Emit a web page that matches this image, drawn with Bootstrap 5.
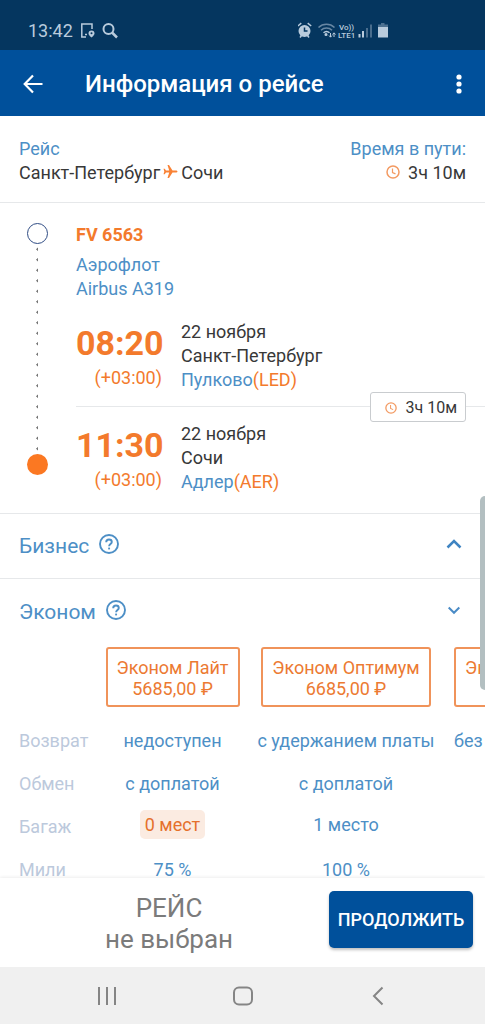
<!DOCTYPE html>
<html lang="ru">
<head>
<meta charset="utf-8">
<meta name="viewport" content="width=device-width, initial-scale=1">
<title>Информация о рейсе</title>
<link href="https://cdn.jsdelivr.net/npm/bootstrap@5.3.0/dist/css/bootstrap.min.css" rel="stylesheet">
<style>
  :root { --sky: #4d8fc6; --flame: #f37a2c; --navy: #00509b; --edge: 19px; }
  body { font-family: Roboto, "Liberation Sans", sans-serif; font-size: 18px; line-height: 24px; color: #383838; background: #fff; }
  .c-sky { color: var(--sky); }
  .c-flame { color: var(--flame); }
  .edge-x { padding-left: var(--edge); padding-right: var(--edge); }
  .rule { border-bottom: 1px solid #e6e8ea; }
  .plain-btn { background: none; border: 0; padding: 0; line-height: 0; color: inherit; }

  .status-bar { background: #05365f; color: #b9cbdc; height: 50px; padding: 12px 94px 0 28px; }
  .app-bar { background: var(--navy); color: #fff; height: 66px; padding: 2px 17px 0 21px; }
  .app-title { font-size: 24px; line-height: 32px; font-weight: 500; margin-left: 40px; }

  .summary { padding-top: 21px; padding-bottom: 17px; }
  .plane { margin: 3px 3px 0; }
  .route { padding: 20px 0 19px 27px; gap: 28px; }
  .timeline { width: 21px; margin-bottom: 19px; }
  .stop-start, .stop-end { width: 21px; height: 21px; border-radius: 50%; flex: none; }
  .stop-start { border: 1px solid #2f4c84; }
  .stop-end { background: #fb7822; }
  .dots { width: 3px; background: radial-gradient(circle, #777 0 1px, transparent 1px) center top / 3px 5%; }
  .carrier { margin: 6px 0 19px; }
  .leg { gap: 19px; }
  .leg-time { width: 86px; text-align: right; }
  .clock-time { font-size: 34px; line-height: 46px; font-weight: 700; }
  .leg-split { border-top: 1px solid #e6e8ea; margin: 14px 0 15px; }
  .duration { right: var(--edge); background: #fff; border: 1px solid #c9cccf; border-radius: 3px; font-size: 16px; line-height: 27px; padding: 1px 8px 0 14px; gap: 8px; }

  .fare-head { height: 65px; padding-right: 22px; }
  .fare-name { font-size: 21px; gap: 10px; }
  .fares { table-layout: fixed; width: 652px; margin: 3px 0 0; }
  .fares th, .fares td { padding: 0; height: 43px; text-align: center; font-weight: 400; white-space: nowrap; color: var(--sky); }
  .fares tbody th { color: #bcc9dc; text-align: left; padding-left: var(--edge); }
  .fares thead th { height: 72px; vertical-align: top; }
  .fares .bag td { padding-bottom: 4px; }
  .col-label { width: 98px; }
  .col-lite { width: 149px; }
  .col-opt { width: 198px; }
  .fares .from-left { text-align: left; padding-left: 9px; }
  .btn-fare { border: 2px solid #f0935a; border-radius: 3px; color: #ec7a32; background: #fff; height: 60px; padding: 8px 9px; font-size: 18px; line-height: 21px; }
  .no-bag { background: #fbebe1; color: #e5702c; border-radius: 5px; padding: 4px 5px; }
  .scroll-thumb { right: 0; top: 380px; width: 5px; height: 194px; background: #b3bfc1; border-radius: 5px 0 0 5px; }

  .checkout { height: 89px; padding: 3px 12px 0 9px; box-shadow: 0 -1px 3px rgba(0,0,0,.07); }
  .choice { font-size: 26px; line-height: 31px; color: #7b7b7b; }
  .btn-go { background: var(--navy); color: #fff; border: 0; border-radius: 5px; width: 144px; height: 57px; margin-bottom: 9px; font-size: 18px; font-weight: 500; box-shadow: 0 2px 3px rgba(0,0,0,.25); }
  .sys-nav { background: #f0f0f0; height: 57px; color: #858585; padding: 0 39px; }
</style>
</head>
<body class="vh-100 d-flex flex-column overflow-hidden">

<svg width="0" height="0" class="position-absolute" aria-hidden="true">
  <symbol id="clock" viewBox="0 0 14 14"><g fill="none" stroke="#f39a62" stroke-width="1.5"><circle cx="7" cy="7" r="6"/><path d="M6.5 3.5v4l3 1.4" stroke-width="1.2"/></g></symbol>
  <symbol id="help" viewBox="0 0 20 20"><g fill="none" stroke="currentColor" stroke-width="1.9"><circle cx="10" cy="10" r="9"/><path d="M7.2 8.2c0-1.700 1.200-2.700 2.800-2.700s2.800 1 2.800 2.500c0 2-2.700 2.200-2.700 4.200"/><path d="M10.100 13.600v1.800"/></g></symbol>
</svg>

<div class="status-bar d-flex justify-content-between flex-shrink-0">
  <div class="d-flex align-items-start">
    <span style="line-height:38px">13:42</span>
    <svg class="mt-2 ms-1" width="42" height="22" viewBox="0 0 42 22" fill="none" stroke="currentColor" stroke-width="1.5">
      <path d="M9 17H4.800V4H15v5M8 14.500h2"/><path d="M14.500 17.500s-3-2.300-3-4a3 3 0 0 1 6 0c0 1.700-3 4-3 4z" fill="currentColor" stroke="none"/><circle cx="14.500" cy="13.300" r="1" fill="#05365f" stroke="none"/>
      <circle cx="31.500" cy="9" r="5" stroke-width="2"/><path d="M35 12.500l5 5" stroke-width="2.500"/>
    </svg>
  </div>
  <svg class="mt-2" width="93" height="20" viewBox="0 0 93 20" fill="none" stroke="currentColor">
    <g stroke-width="1.500"><circle cx="6.500" cy="11" r="6" fill="currentColor" stroke="none"/><path d="M-.2 6l3.500-2.800M13.200 6L9.700 3.200M2 17.500l1.500-2M11 17.500l-1.500-2"/><path d="M6.500 7.500V11h3" stroke="#05365f"/></g>
    <g stroke-width="1.500"><path d="M20.500 7.500a11.500 11.500 0 0 1 16 0M23 10.200a8 8 0 0 1 11 0" opacity=".55"/><path d="M25.500 12.800a4.500 4.500 0 0 1 6 0"/><circle cx="28" cy="14.500" r=".8" fill="currentColor"/></g>
    <path d="M32.500 13v4M31 15.500l1.500 1.700 1.500-1.700M36 17v-4M34.500 14.500l1.500-1.700 1.500 1.700"/>
    <g fill="currentColor" stroke="none" font-family="Roboto, sans-serif" font-weight="500" font-size="8"><text x="41" y="9.500">Vo))</text><text x="40" y="17.500">LTE1</text></g>
    <path d="M61.500 14v3.500M65 11v6.500" stroke-width="2"/><path d="M69 8v9.500M73 4.500v13" stroke-width="1.500" opacity=".5"/>
    <path d="M80 7V4.500h3V3h3.500v1.500H90V7z" fill="currentColor" stroke="none" opacity=".4"/><path d="M80 7h10v10.500H80z" fill="currentColor" stroke="none"/>
  </svg>
</div>

<header class="app-bar d-flex align-items-center flex-shrink-0">
  <button class="plain-btn" aria-label="Назад"><svg width="24" height="24" viewBox="0 0 24 24" fill="none" stroke="#fff" stroke-width="2.200"><path d="M21.500 12H4.500M12 3.500L3.700 12l8.300 8.500"/></svg></button>
  <h1 class="app-title mb-0">Информация о рейсе</h1>
  <button class="plain-btn ms-auto" aria-label="Меню"><svg width="18" height="24" viewBox="0 0 18 24" fill="#fff"><circle cx="9" cy="5" r="2.600"/><circle cx="9" cy="12" r="2.600"/><circle cx="9" cy="19" r="2.600"/></svg></button>
</header>

<main class="flex-grow-1 overflow-hidden position-relative" style="min-height:0">
  <section class="summary edge-x rule d-flex justify-content-between">
    <div>
      <div class="c-sky">Рейс</div>
      <div class="d-flex">Санкт-Петербург<svg class="plane" width="15" height="15" viewBox="0 0 15 15" fill="#f98235"><path d="M14.500 7.500c0 .7-.8 1.100-1.700 1.100H9.500L6 14H4.500l1.700-5.400H3L1.700 10.300H.5l.8-2.800-.8-2.800h1.200L3 6.400h3.200L4.500 1H6l3.500 5.400h3.300c.9 0 1.700.4 1.700 1.100z"/></svg>Сочи</div>
    </div>
    <div class="text-end">
      <div class="c-sky">Время в пути:</div>
      <div><svg class="me-2 align-baseline" width="14" height="14" aria-hidden="true"><use href="#clock"/></svg>3ч 10м</div>
    </div>
  </section>

  <section class="route rule d-flex">
    <div class="timeline d-flex flex-column align-items-center">
      <div class="stop-start"></div><div class="dots flex-grow-1"></div><div class="stop-end"></div>
    </div>
    <div class="flex-grow-1 position-relative">
      <div class="c-flame fw-bold">FV 6563</div>
      <div class="carrier c-sky">Аэрофлот<br>Airbus A319</div>
      <div class="leg d-flex">
        <div class="leg-time c-flame"><div class="clock-time">08:20</div>(+03:00)</div>
        <div>22 ноября<br>Санкт-Петербург<br><span class="c-sky">Пулково</span><span class="c-flame">(LED)</span></div>
      </div>
      <div class="leg-split position-relative">
        <div class="duration position-absolute top-0 translate-middle-y d-flex align-items-center"><svg width="12" height="12" aria-hidden="true"><use href="#clock"/></svg>3ч 10м</div>
      </div>
      <div class="leg d-flex">
        <div class="leg-time c-flame"><div class="clock-time">11:30</div>(+03:00)</div>
        <div>22 ноября<br>Сочи<br><span class="c-sky">Адлер</span><span class="c-flame">(AER)</span></div>
      </div>
    </div>
  </section>

  <section class="fare-head edge-x rule c-sky d-flex align-items-center justify-content-between">
    <div class="fare-name d-flex pt-1">Бизнес<button class="plain-btn" aria-label="О классе Бизнес"><svg class="mb-2" width="20" height="20"><use href="#help"/></svg></button></div>
    <button class="plain-btn" aria-label="Развернуть"><svg class="mb-1" width="18" height="12" viewBox="0 0 18 12" fill="none" stroke="#3f84c2" stroke-width="2.500"><path d="M2.500 9.500L9 3l6.500 6.500"/></svg></button>
  </section>
  <section>
    <div class="fare-head edge-x c-sky d-flex align-items-center justify-content-between">
      <div class="fare-name d-flex pt-1">Эконом<button class="plain-btn" aria-label="О классе Эконом"><svg class="mb-2" width="20" height="20"><use href="#help"/></svg></button></div>
      <button class="plain-btn" aria-label="Свернуть"><svg class="mb-1" width="18" height="12" viewBox="0 0 18 12" fill="none" stroke="#4a8bc6" stroke-width="2"><path d="M3.700 3.500L9 8.800l5.300-5.300"/></svg></button>
    </div>
    <table class="fares">
      <colgroup><col class="col-label"><col class="col-lite"><col class="col-opt"><col></colgroup>
      <thead><tr>
        <th></th>
        <th scope="col"><button class="btn-fare">Эконом Лайт<br>5685,00 ₽</button></th>
        <th scope="col"><button class="btn-fare">Эконом Оптимум<br>6685,00 ₽</button></th>
        <th scope="col" class="from-left"><button class="btn-fare d-inline-flex align-items-start">Эконом</button></th>
      </tr></thead>
      <tbody>
        <tr><th scope="row">Возврат</th><td>недоступен</td><td>с удержанием платы</td><td class="from-left">без</td></tr>
        <tr><th scope="row">Обмен</th><td>с доплатой</td><td>с доплатой</td><td></td></tr>
        <tr class="bag"><th scope="row">Багаж</th><td><span class="no-bag">0 мест</span></td><td>1 место</td><td></td></tr>
        <tr><th scope="row">Мили</th><td>75 %</td><td>100 %</td><td></td></tr>
      </tbody>
    </table>
  </section>
  <div class="scroll-thumb position-absolute"></div>
</main>

<footer class="flex-shrink-0 bg-white position-relative">
  <div class="checkout d-flex align-items-center">
    <div class="choice flex-grow-1 text-center">РЕЙС<br>не выбран</div>
    <button class="btn-go">ПРОДОЛЖИТЬ</button>
  </div>
  <nav class="sys-nav d-flex align-items-center" aria-label="Системная навигация">
    <button class="plain-btn flex-fill" aria-label="Недавние"><svg width="20" height="20" viewBox="0 0 20 20" fill="none" stroke="currentColor" stroke-width="2"><path d="M2 1v18M10 1v18M18 1v18"/></svg></button>
    <button class="plain-btn flex-fill" aria-label="Домой"><svg width="20" height="20" viewBox="0 0 20 20" fill="none" stroke="currentColor" stroke-width="2"><rect x="1" y="1.500" width="18" height="17" rx="5"/></svg></button>
    <button class="plain-btn flex-fill" aria-label="Назад"><svg width="20" height="20" viewBox="0 0 20 20" fill="none" stroke="currentColor" stroke-width="2"><path d="M14.500 1.500L6 10l8.500 8.500"/></svg></button>
  </nav>
</footer>
<script src="https://cdn.jsdelivr.net/npm/bootstrap@5.3.0/dist/js/bootstrap.bundle.min.js"></script>
</body>
</html>
